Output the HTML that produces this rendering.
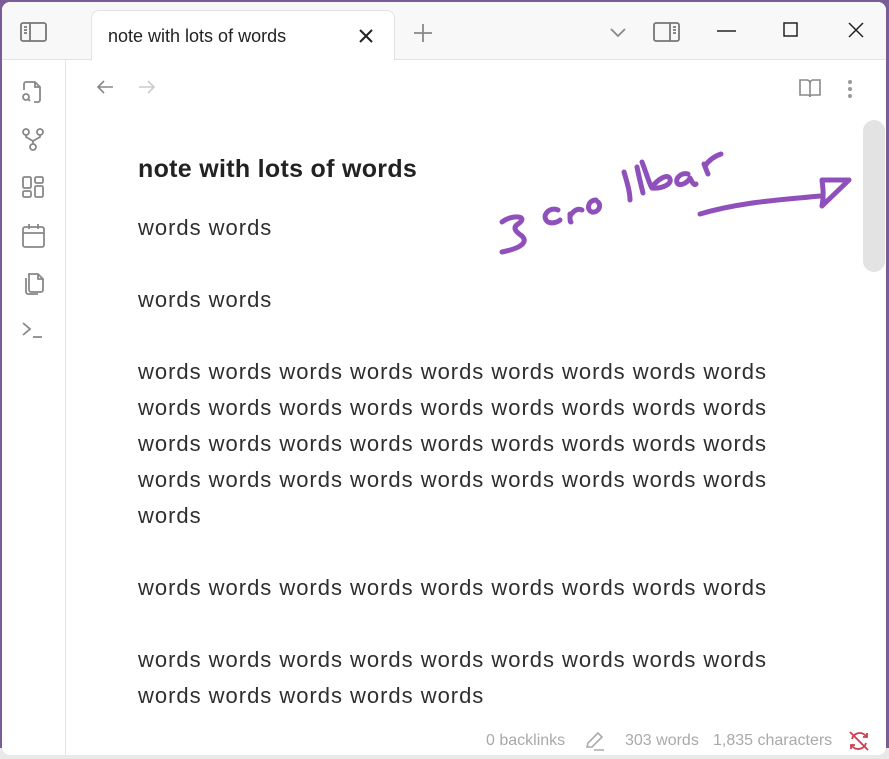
<!DOCTYPE html>
<html><head><meta charset="utf-8"><style>
*{margin:0;padding:0;box-sizing:border-box}
body{width:889px;height:759px;overflow:hidden;background:#7a5c98;font-family:"Liberation Sans",sans-serif;position:relative}
.bottom{position:absolute;left:0;top:748px;width:889px;height:11px;background:#e9e9e9}
.win{position:absolute;left:2px;top:2px;width:884px;height:753px;background:#fff;border-radius:8px;overflow:hidden}
.top{position:absolute;left:0;top:0;width:884px;height:58px;background:#f8f8f8;border-bottom:1px solid #e3e3e3}
.tab{position:absolute;left:89px;top:8px;width:304px;height:51px;background:#fff;border:1px solid #e3e3e3;border-bottom:none;border-radius:8px 8px 0 0}
.tab span{position:absolute;left:16px;top:15px;font-size:18px;color:#222}
.side{position:absolute;left:0;top:58px;width:64px;height:700px;border-right:1px solid #e3e3e3;background:#fff}
svg{position:absolute;overflow:visible}
.t{position:absolute;left:136px;font-size:22px;letter-spacing:0.98px;color:#2e2e2e;line-height:36px;white-space:nowrap}
.st{position:absolute;top:730px;font-size:16px;color:#a9a9a9}
</style></head><body>
<div class="bottom"></div>
<div class="win">
<div class="top"></div>
<div class="tab"><span>note with lots of words</span>
<svg style="left:266px;top:17px" width="16" height="16"><path d="M2 2L14 14M14 2L2 14" stroke="#222" stroke-width="2"/></svg></div>
<svg style="left:18px;top:20px" width="28" height="22" fill="none" stroke="#777" stroke-width="1.8"><rect x="1" y="1" width="25" height="18" rx="2"/><path d="M10 1V19M4 5h3M4 8h3M4 11h3"/></svg>
<svg style="left:411px;top:21px" width="20" height="20" stroke="#888" stroke-width="1.8"><path d="M10 1V19M1 10H19"/></svg>
<svg style="left:608px;top:26px" width="18" height="10" fill="none" stroke="#888" stroke-width="1.8"><path d="M1 1L8 8L15 1"/></svg>
<svg style="left:651px;top:20px" width="28" height="22" fill="none" stroke="#777" stroke-width="1.8"><rect x="1" y="1" width="25" height="18" rx="2"/><path d="M17 1V19M20 5h3M20 8h3M20 11h3"/></svg>
<svg style="left:715px;top:28px" width="20" height="4" stroke="#222" stroke-width="1.5"><path d="M0 1H19"/></svg>
<svg style="left:781px;top:20px" width="16" height="16" fill="none" stroke="#222" stroke-width="1.5"><rect x="1" y="1" width="13" height="13"/></svg>
<svg style="left:846px;top:20px" width="16" height="16" stroke="#222" stroke-width="1.5"><path d="M1 1L15 15M15 1L1 15"/></svg>
<div class="side"></div>
<svg style="left:18px;top:78px" width="26" height="26" fill="none" stroke="#888" stroke-width="1.8"><path d="M4 10V4a2 2 0 0 1 2-2h9l5 5v13a2 2 0 0 1-2 2h-4M15 2v5h5"/><circle cx="6" cy="17" r="3"/><path d="M8 19l2 2"/></svg>
<svg style="left:20px;top:126px" width="24" height="26" fill="none" stroke="#888" stroke-width="1.8"><circle cx="4" cy="4" r="3"/><circle cx="18" cy="4" r="3"/><circle cx="11" cy="19" r="3"/><path d="M4 7v2l7 4 7-4V7M11 13v3"/></svg>
<svg style="left:20px;top:174px" width="24" height="24" fill="none" stroke="#888" stroke-width="1.8"><rect x="1" y="1" width="8" height="11" rx="1.5"/><rect x="13" y="1" width="8" height="6" rx="1.5"/><rect x="1" y="15" width="8" height="6" rx="1.5"/><rect x="13" y="10" width="8" height="11" rx="1.5"/></svg>
<svg style="left:20px;top:221px" width="24" height="26" fill="none" stroke="#888" stroke-width="1.8"><rect x="1" y="4" width="21" height="20" rx="2"/><path d="M1 10H22M7 1v5M16 1v5"/></svg>
<svg style="left:20px;top:268px" width="24" height="26" fill="none" stroke="#888" stroke-width="1.8"><path d="M7 4h9l5 5v11a2 2 0 0 1-2 2H9a2 2 0 0 1-2-2zM16 4v5h5M4 8v14a2 2 0 0 0 2 2h10"/></svg>
<svg style="left:20px;top:320px" width="24" height="20" fill="none" stroke="#888" stroke-width="1.8"><path d="M1 1l7 6-7 6M11 15h9"/></svg>
<svg style="left:94px;top:77px" width="20" height="16" fill="none" stroke="#888" stroke-width="1.6"><path d="M17 8H2M8 2L2 8l6 6"/></svg>
<svg style="left:136px;top:77px" width="20" height="16" fill="none" stroke="#ccc" stroke-width="1.6"><path d="M1 8H16M10 2l6 6-6 6"/></svg>
<svg style="left:797px;top:76px" width="24" height="22" fill="none" stroke="#888" stroke-width="1.6"><path d="M1 2h7a3 3 0 0 1 3 3v14a2 2 0 0 0-2-2H1zM21 2h-7a3 3 0 0 0-3 3v14a2 2 0 0 1 2-2h8z"/></svg>
<svg style="left:845px;top:77px" width="6" height="20" fill="#999"><circle cx="3" cy="3" r="2"/><circle cx="3" cy="10" r="2"/><circle cx="3" cy="17" r="2"/></svg>
<div style="position:absolute;left:861px;top:118px;width:22px;height:152px;background:#e3e3e3;border-radius:11px"></div>
<div style="position:absolute;left:136px;top:153px;font-size:25px;font-weight:bold;color:#222;letter-spacing:0.3px">note with lots of words</div>
<div class="t" style="top:208px">words words</div>
<div class="t" style="top:280px">words words</div>
<div class="t" style="top:352px">words words words words words words words words words<br>words words words words words words words words words<br>words words words words words words words words words<br>words words words words words words words words words<br>words</div>
<div class="t" style="top:568px">words words words words words words words words words</div>
<div class="t" style="top:640px">words words words words words words words words words<br>words words words words words</div>
<svg style="left:490px;top:140px" width="400" height="140" fill="none" stroke="#9050bb" stroke-width="5" stroke-linecap="round" stroke-linejoin="round">
<path d="M10 80c10-8 28-6 16 2-6 4-2 8 4 12 6 6 0 12-20 16"/>
<path d="M66 68c-8-4-18 6-10 12 4 2 10 0 12-2"/>
<path d="M78 72c0 6 0 8 1 8M78 74c4-6 8-8 12-6"/>
<path d="M104 58c-8 0-10 10-4 12 6 1 10-6 6-10"/>
<path d="M132 30c3 10 6 20 6 28M145 25c2 10 4 18 6 26"/>
<path d="M150 20c4 10 8 24 10 26M160 45c6-8 16-14 18-8 2 5-8 10-18 9"/>
<path d="M196 32c-8-2-14 6-10 10 4 2 10-2 12-6 2 4 4 8 6 6"/>
<path d="M212 22c2 5 3 8 4 10M213 24c4-6 10-10 16-12"/>
<path d="M208 72c40-12 80-14 120-18"/>
<path d="M330 38c1 8 2 16 0 26M330 38h27L330 64"/>
</svg>
<div class="st" style="left:484px">0 backlinks</div>
<svg style="left:583px;top:729px" width="22" height="20" fill="none" stroke="#aaa" stroke-width="1.6"><path d="M2 16l1-4L13 2l4 4L7 16zM9 19h10"/></svg>
<div class="st" style="left:623px">303 words</div>
<div class="st" style="left:711px">1,835 characters</div>
<svg style="left:846px;top:728px" width="22" height="22" fill="none" stroke="#d33c4e" stroke-width="1.8"><path d="M2 2L20 20M4 9a8 8 0 0 1 13-4l2 2M19 3v4h-4M18 13a8 8 0 0 1-13 4l-2-2M3 19v-4h4"/></svg>
</div>
</body></html>
